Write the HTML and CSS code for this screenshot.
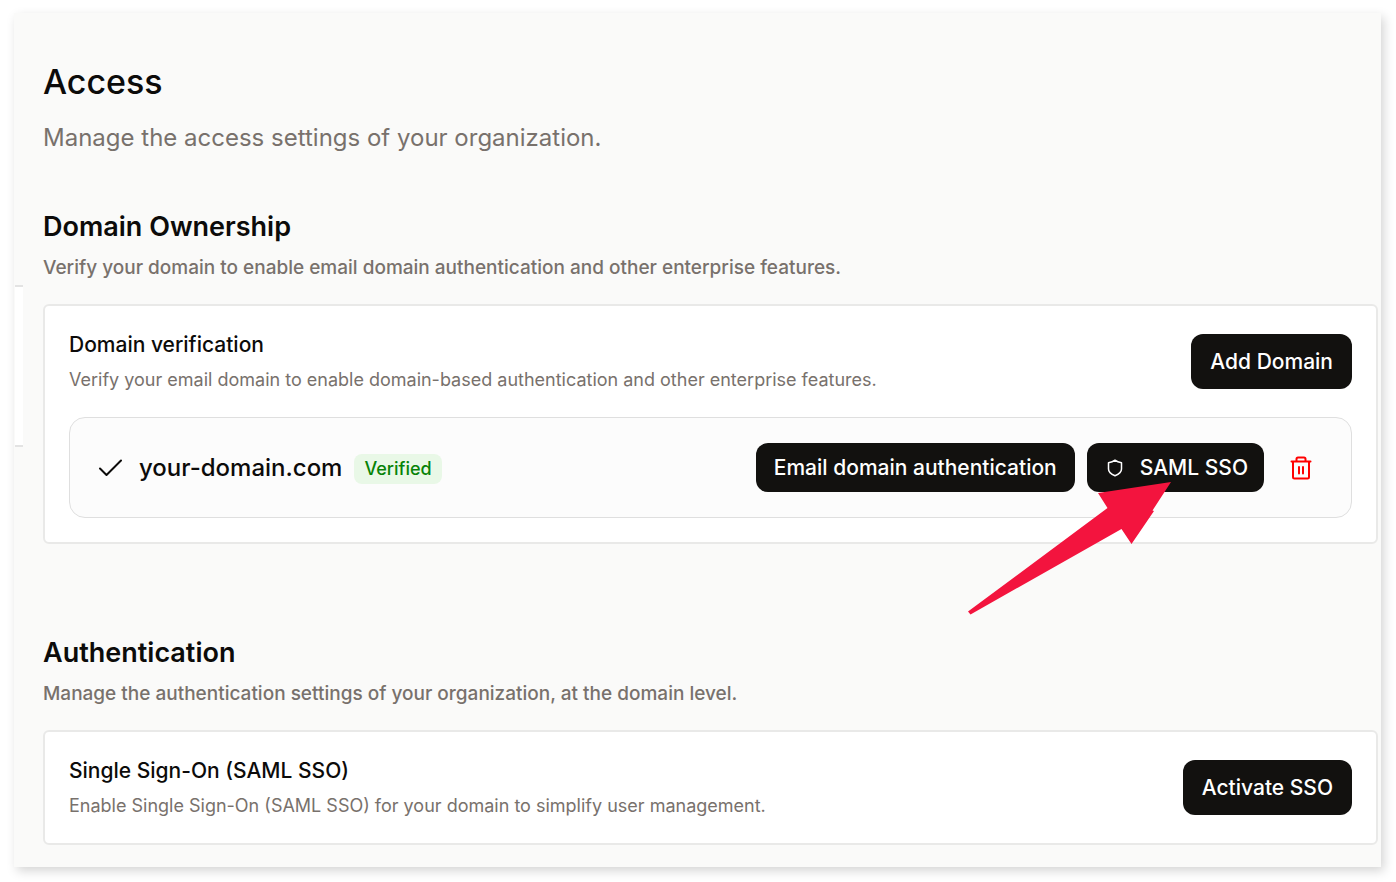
FILE: index.html
```html
<!DOCTYPE html>
<html lang="en">
<head>
<meta charset="utf-8">
<meta name="viewport" content="width=device-width, initial-scale=1">
<title>Access</title>
<link rel="stylesheet" href="styles.css">
</head>
<body>
<main class="panel">
  <div class="side-stub" aria-hidden="true"></div>
  <header class="page-header">
    <h1 class="page-title">Access</h1>
    <p class="page-subtitle">Manage the access settings of your organization.</p>
  </header>

  <section class="section">
    <h2 class="section-title">Domain Ownership</h2>
    <p class="section-text">Verify your domain to enable email domain authentication and other enterprise features.</p>
    <div class="card">
      <div class="card-row">
        <div class="card-copy">
          <h3 class="card-title">Domain verification</h3>
          <p class="card-text">Verify your email domain to enable domain-based authentication and other enterprise features.</p>
        </div>
        <button class="button button-large" type="button">Add Domain</button>
      </div>
      <div class="domain">
        <svg class="check" viewBox="0 0 24 24" aria-hidden="true"><path d="M2 12.5 8.5 19 23 4.5"/></svg>
        <span class="domain-name">your-domain.com</span>
        <span class="badge">Verified</span>
        <div class="actions">
          <button class="button" type="button">Email domain authentication</button>
          <div class="pointed">
            <button class="button button-icon" type="button">
              <svg class="shield" viewBox="0 0 16 18" aria-hidden="true"><path d="M8 1.2C6.300 2.600 4 3.400 1.500 3.700V10C1.500 13 4 15.200 8 16.800C12 15.200 14.500 13 14.500 10V3.700C12 3.400 9.700 2.600 8 1.200Z"/></svg>
              SAML SSO
            </button>
            <svg class="arrow" viewBox="0 0 204 133" aria-hidden="true"><path d="M203 0 130 11 139.500 26 0 129.500 2.500 132.500 153.500 47 163.500 62 186 29 184.500 28.500Z"/></svg>
          </div>
          <button class="delete" type="button" aria-label="Delete domain">
            <svg class="trash" viewBox="0 0 22 24" aria-hidden="true"><path d="M1.5 5.500H20.500M6.500 5.500V3Q6.500 1.500 8 1.500H14Q15.500 1.500 15.500 3V5.500M3 5.500V21Q3 22.500 4.500 22.500H17.500Q19 22.500 19 21V5.500M9 11V17.500M13 11V17.500"/></svg>
          </button>
        </div>
      </div>
    </div>
  </section>

  <section class="section">
    <h2 class="section-title">Authentication</h2>
    <p class="section-text">Manage the authentication settings of your organization, at the domain level.</p>
    <div class="card">
      <div class="card-row">
        <div class="card-copy">
          <h3 class="card-title">Single Sign-On (SAML SSO)</h3>
          <p class="card-text">Enable Single Sign-On (SAML SSO) for your domain to simplify user management.</p>
        </div>
        <button class="button button-large" type="button">Activate SSO</button>
      </div>
    </div>
  </section>
</main>
</body>
</html>
```

FILE: styles.css
```css
* {
  box-sizing: border-box;
}

body {
  margin: 0;
  padding: 13px 15px 15px 14px;
  min-height: 100vh;
  display: flex;
  background: #fff;
  color: #0c0b0a;
  font-family: Inter, "Liberation Sans", sans-serif;
}

h1, h2, h3, p {
  margin: 0;
}

.panel {
  position: relative;
  flex: 1;
  padding: 47px 3px 20px 29px;
  display: flex;
  flex-direction: column;
  background: #fafaf9;
  box-shadow: 3px 4px 10px rgba(0, 0, 0, 0.17);
}

.side-stub {
  position: absolute;
  left: 1px;
  top: 272px;
  width: 8px;
  height: 162px;
  background: #fff;
  border: solid #e3e3e3;
  border-width: 2px 0;
}

.page-header {
  display: grid;
  gap: 16px;
  margin-bottom: 53px;
}

.page-title {
  font-size: 34px;
  line-height: 44px;
  font-weight: 500;
}

.page-subtitle {
  font-size: 24px;
  line-height: 36px;
  color: #78716c;
}

.section + .section {
  margin-top: 91px;
}

.section-title {
  font-size: 27px;
  line-height: 36px;
  font-weight: 600;
}

.section-text {
  margin: 9px 0 22px;
  font-size: 19px;
  line-height: 28px;
  font-weight: 500;
  color: #78716c;
}

.card {
  display: grid;
  gap: 24px;
  padding: 24px;
  background: #fff;
  border: 2px solid #e9e9e8;
  border-radius: 6px;
}

.card-row {
  display: flex;
  align-items: center;
  justify-content: space-between;
  gap: 24px;
}

.card-copy {
  display: grid;
  gap: 7px;
}

.card-title {
  font-size: 21px;
  line-height: 30px;
  font-weight: 500;
}

.card-text {
  font-size: 18px;
  line-height: 26px;
  color: #78716c;
}

.button {
  height: 49px;
  padding: 0 18px;
  border: 0;
  border-radius: 12px;
  background: #12110f;
  color: #fff;
  font: 500 21px/28px Inter, "Liberation Sans", sans-serif;
  white-space: nowrap;
}

.button-large {
  height: 55px;
  padding: 0 19px;
}

.button-icon {
  display: flex;
  align-items: center;
  gap: 17px;
  padding: 0 16px 0 20px;
}

.domain {
  display: flex;
  align-items: center;
  min-height: 101px;
  padding: 0 35px 0 28px;
  background: #fcfcfc;
  border: 1px solid #dfdfdf;
  border-radius: 16px;
}

svg {
  display: block;
  fill: none;
  stroke: currentColor;
  stroke-linecap: round;
  stroke-linejoin: round;
}

.check {
  width: 24px;
  height: 24px;
  stroke-width: 2;
}

.domain-name {
  margin-left: 17px;
  font-size: 24px;
  line-height: 32px;
  font-weight: 500;
}

.badge {
  margin: 2px 0 0 12px;
  padding: 1px 10px;
  border-radius: 8px;
  background: #e9f8e7;
  color: #078307;
  font-size: 18px;
  line-height: 28px;
  font-weight: 500;
}

.actions {
  display: flex;
  align-items: center;
  gap: 12px;
  margin-left: auto;
}

.shield {
  width: 16px;
  height: 18px;
  stroke-width: 1.5;
}

.pointed {
  position: relative;
}

.arrow {
  position: absolute;
  right: 92px;
  top: 39px;
  width: 204px;
  height: 133px;
  fill: #f3143e;
  stroke: none;
  pointer-events: none;
}

.delete {
  margin-left: 10px;
  padding: 4px;
  border: 0;
  background: none;
  color: #f00;
}

.trash {
  width: 22px;
  height: 24px;
  stroke-width: 2;
}
```
